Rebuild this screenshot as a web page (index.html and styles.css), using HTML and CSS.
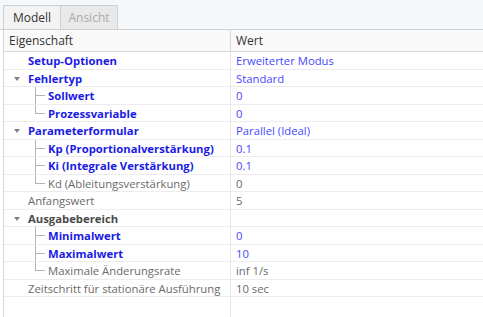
FILE: index.html
```html
<!DOCTYPE html>
<html lang="de">
<head>
  <meta charset="UTF-8">
  <title>Eigenschaften</title>
  <link rel="stylesheet" href="styles.css">
</head>
<body>
  <div class="tabs">
    <div class="tab active">Modell</div>
    <div class="tab off">Ansicht</div>
  </div>

  <div class="grid">
    <div class="row head">
      <div class="name">Eigenschaft</div>
      <div class="val">Wert</div>
    </div>

    <div class="row">
      <div class="name top mod">Setup-Optionen</div>
      <div class="val mod">Erweiterter Modus</div>
    </div>
    <div class="row">
      <div class="name top mod"><span class="arrow"></span>Fehlertyp</div>
      <div class="val mod">Standard</div>
    </div>
    <div class="row">
      <div class="name child mod">Sollwert</div>
      <div class="val mod">0</div>
    </div>
    <div class="row">
      <div class="name child last mod">Prozessvariable</div>
      <div class="val mod">0</div>
    </div>
    <div class="row">
      <div class="name top mod"><span class="arrow"></span>Parameterformular</div>
      <div class="val mod">Parallel (Ideal)</div>
    </div>
    <div class="row">
      <div class="name child mod">Kp (Proportionalverstärkung)</div>
      <div class="val mod">0.1</div>
    </div>
    <div class="row">
      <div class="name child mod">Ki (Integrale Verstärkung)</div>
      <div class="val mod">0.1</div>
    </div>
    <div class="row">
      <div class="name child last">Kd (Ableitungsverstärkung)</div>
      <div class="val">0</div>
    </div>
    <div class="row">
      <div class="name top">Anfangswert</div>
      <div class="val">5</div>
    </div>
    <div class="row">
      <div class="name top group"><span class="arrow"></span>Ausgabebereich</div>
      <div class="val"></div>
    </div>
    <div class="row">
      <div class="name child mod">Minimalwert</div>
      <div class="val mod">0</div>
    </div>
    <div class="row">
      <div class="name child mod">Maximalwert</div>
      <div class="val mod">10</div>
    </div>
    <div class="row">
      <div class="name child last">Maximale Änderungsrate</div>
      <div class="val">inf 1/s</div>
    </div>
    <div class="row">
      <div class="name top">Zeitschritt für stationäre Ausführung</div>
      <div class="val">10 sec</div>
    </div>

    <div class="row filler">
      <div class="name"></div>
      <div class="val"></div>
    </div>
  </div>
</body>
</html>
```

FILE: styles.css
```css
body {
  margin:0;
  padding:0;
  font-family:"Open Sans", "Noto Sans", sans-serif;
  font-size:11.3px;
  color:#6a6a6a;
  background:white;
  height:317px;
  display:flex;
  flex-direction:column;
  overflow:hidden;
}

.tabs {
  background:#f4f8fa;
  height:24px;
  padding:5px 0 0 3px;
  display:flex;
  border-bottom:1px solid #cfcfcf;
}
.tab {
  width:56px;
  height:23px;
  line-height:23px;
  text-align:center;
  border:1px solid #cfcfcf;
  border-bottom:none;
  font-size:12px;
}
.tab.active {
  background:#f3f3f3;
  color:#333;
}
.tab.off {
  background:#e9e9e9;
  color:#aaa;
  border-left:none;
}

.grid {
  flex:1;
  display:flex;
  flex-direction:column;
  margin-left:3px;
  border-left:1px solid #d6d6d6;
}
.row {
  display:flex;
  height:17.5px;
  line-height:17px;
  border-bottom:1px solid #ececec;
  box-sizing:border-box;
}
.row.head {
  height:22px;
  line-height:21px;
  background:#f9f9f9;
  border-bottom:1px solid #d8d8d8;
  color:#333;
  font-size:12px;
}
.row.filler {
  flex:1;
  border-bottom:none;
}
.name {
  width:227px;
  box-sizing:border-box;
  border-right:1px solid #e3e3e3;
  position:relative;
  white-space:nowrap;
  overflow:hidden;
}
.head .name {
  padding-left:5px;
  border-right-color:#d8d8d8;
}
.head .val {
  padding-left:5px;
}
.val {
  flex:1;
  padding-left:5px;
  white-space:nowrap;
}

.name.top {
  padding-left:24px;
}
.name.child {
  padding-left:44px;
}
.name.mod,
.name.group {
  font-weight:bold;
}
.name.mod {
  color:#1a1ae6;
}
.name.group {
  color:#4a4a4a;
}
.val.mod {
  color:#4747ff;
}

.arrow {
  position:absolute;
  left:10px;
  top:7px;
  border-left:3.5px solid transparent;
  border-right:3.5px solid transparent;
  border-top:4px solid #808080;
}

/* Baumlinien */
.name.child::before {
  content:"";
  position:absolute;
  left:31px;
  top:-1px;
  bottom:-1px;
  border-left:1px solid #b4b4b4;
}
.name.child.last::before {
  bottom:8px;
}
.name.child::after {
  content:"";
  position:absolute;
  left:31px;
  top:8px;
  width:10px;
  border-top:1px solid #b4b4b4;
}
```
